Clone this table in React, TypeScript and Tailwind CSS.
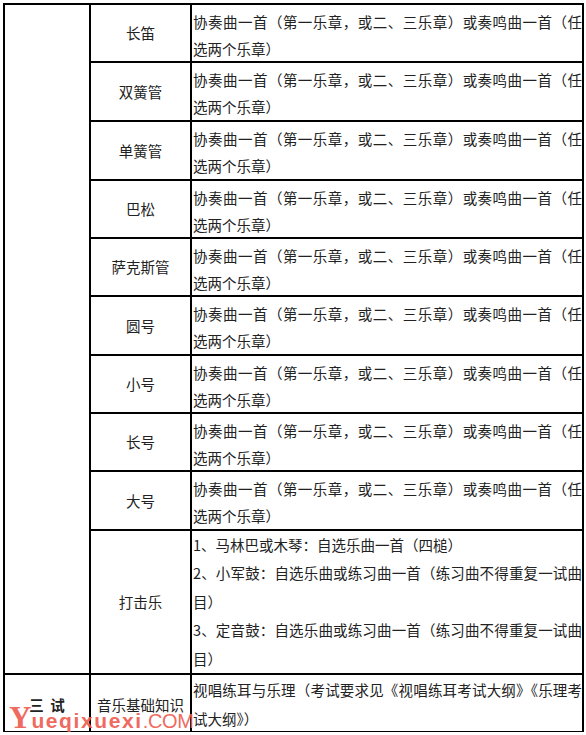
import React from "react";

const rows = ["长笛", "双簧管", "单簧管", "巴松", "萨克斯管", "圆号", "小号", "长号", "大号"];
const heights = ["h-[58px]", "h-[59px]", "h-[59px]", "h-[58px]", "h-[58px]", "h-[59px]", "h-[58px]", "h-[58px]", "h-[59px]"];

const font = "[font-family:'Noto_Sans_CJK_SC','Noto_Sans',sans-serif]";

function Line({ children, full }: { children: React.ReactNode; full?: boolean }) {
  return (
    <div
      className={
        "whitespace-nowrap " + (full ? "text-justify [text-align-last:justify]" : "")
      }
    >
      {children}
    </div>
  );
}

export default function App() {
  return (
    <div className={"relative w-[586px] h-[735px] bg-white text-[#222] " + font}>
      <div className="pl-[3px] pt-[3px]">
        <div className="grid grid-cols-[86px_101px_392px] border-l-2 border-t-2 border-black w-[581px] text-[14.5px]">
          <div className="row-span-10 border-r-2 border-b-2 border-black" />
          {rows.map((name, i) => (
            <React.Fragment key={name}>
              <div
                className={
                  heights[i] +
                  " col-start-2 flex items-center justify-center border-r-2 border-b-2 border-black"
                }
              >
                {name}
              </div>
              <div
                className={
                  heights[i] +
                  " col-start-3 border-r-2 border-b-2 border-black pl-[1px] pt-[3px] leading-[27px]"
                }
              >
                <Line full>协奏曲一首（第一乐章，或二、三乐章）或奏鸣曲一首（任</Line>
                <Line>选两个乐章）</Line>
              </div>
            </React.Fragment>
          ))}
          <div className="h-[144px] col-start-2 flex items-center justify-center border-r-2 border-b-2 border-black">
            打击乐
          </div>
          <div className="h-[144px] col-start-3 border-r-2 border-b-2 border-black pl-[1px] leading-[28.4px]">
            <Line>1、马林巴或木琴：自选乐曲一首（四槌）</Line>
            <Line full>2、小军鼓：自选乐曲或练习曲一首（练习曲不得重复一试曲</Line>
            <Line>目）</Line>
            <Line full>3、定音鼓：自选乐曲或练习曲一首（练习曲不得重复一试曲</Line>
            <Line>目）</Line>
          </div>
          <div className="h-[57px] col-start-1 flex items-center justify-center pt-[3px] border-r-2 border-b-[1px] border-black font-bold">
            三&nbsp;&nbsp;试
          </div>
          <div className="h-[57px] col-start-2 flex items-center justify-center pt-[3px] border-r-2 border-b-[1px] border-black">
            音乐基础知识
          </div>
          <div className="h-[57px] col-start-3 border-r-2 border-b-[1px] border-black pl-[1px] leading-[29px]">
            <Line full>视唱练耳与乐理（考试要求见《视唱练耳考试大纲》《乐理考</Line>
            <Line>试大纲》）</Line>
          </div>
        </div>
      </div>
      <div className="absolute left-[9px] top-[702px] flex items-baseline text-[#ee5a4e] opacity-90 pointer-events-none">
        <span className="[font-family:'Liberation_Serif',serif] font-bold text-[31px] leading-none">Y</span>
        <span className="[font-family:'Liberation_Sans',sans-serif] font-bold text-[21px] leading-none tracking-[1.6px]">
          ueqixuexi
        </span>
        <span className="[font-family:'Liberation_Sans',sans-serif] text-[20px] leading-none tracking-[-0.3px]">
          .COM
        </span>
      </div>
    </div>
  );
}
